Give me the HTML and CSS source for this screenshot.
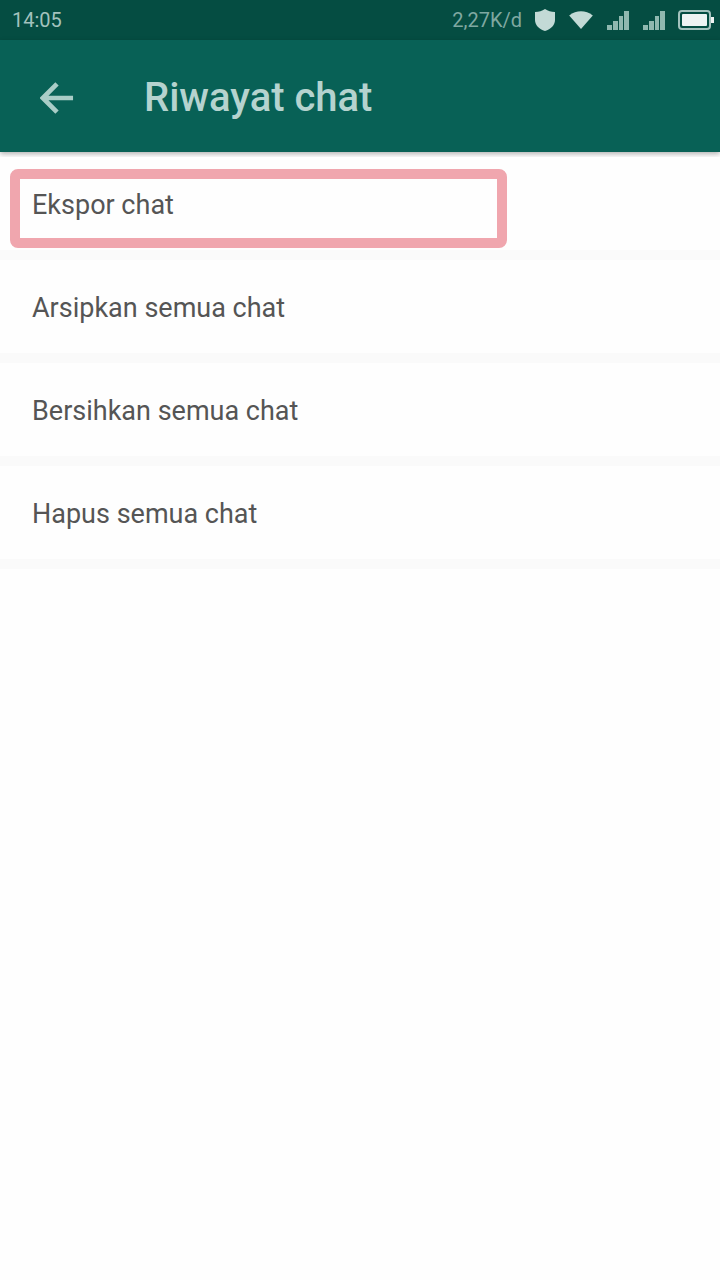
FILE: index.html
```html
<!DOCTYPE html>
<html lang="id">
<head>
<meta charset="utf-8">
<meta name="viewport" content="width=device-width, initial-scale=1">
<title>Riwayat chat</title>
<link rel="stylesheet" href="styles.css">
</head>
<body>
<div class="status-bar">
  <span class="clock">14:05</span>
  <div class="status-icons">
    <span class="speed">2,27K/d</span>
    <svg class="icon-shield" viewBox="0 0 22 24" aria-hidden="true"><path d="M11 1C8 3 5 4 1 4v8c0 5 4 9 10 11 6-2 10-6 10-11V4c-4 0-7-1-10-3z"/></svg>
    <svg class="icon-wifi" viewBox="0 0 28 22" aria-hidden="true"><path d="M1 6C9 0 19 0 27 6L14 21z"/></svg>
    <svg class="icon-signal" viewBox="0 0 24 22" aria-hidden="true"><path d="M1 21h5v-5H1zM7 21h5v-9H7zM13 21h4V7h-4zM18 21h5V2h-5z"/></svg>
    <svg class="icon-signal" viewBox="0 0 24 22" aria-hidden="true"><path d="M1 21h5v-5H1zM7 21h5v-9H7zM13 21h4V7h-4zM18 21h5V2h-5z"/></svg>
    <svg class="icon-battery" viewBox="0 0 36 20" aria-hidden="true"><rect class="battery-case" x="1" y="1" width="31" height="18" rx="3"/><rect x="4" y="4" width="25" height="12" rx="1"/><path d="M33 7h3v6h-3z"/></svg>
  </div>
</div>
<header class="app-bar">
  <button class="back" type="button" aria-label="Kembali">
    <svg class="icon-back" viewBox="0 0 36 36" aria-hidden="true"><path d="M35 18H4M18 3L3 18l15 15"/></svg>
  </button>
  <h1 class="title">Riwayat chat</h1>
</header>
<main class="menu">
  <button class="item item-marked" type="button">Ekspor chat</button>
  <button class="item" type="button">Arsipkan semua chat</button>
  <button class="item" type="button">Bersihkan semua chat</button>
  <button class="item" type="button">Hapus semua chat</button>
</main>
</body>
</html>
```
FILE: styles.css
```css
*,
*::after {
  box-sizing: border-box;
}

body {
  margin: 0;
  min-height: 100vh;
  background: #fefefe;
  color: #444;
  font-family: Roboto, "Noto Sans", sans-serif;
}

.status-bar {
  display: flex;
  align-items: center;
  justify-content: space-between;
  height: 40px;
  padding: 0 6px 0 12px;
  background: #054d42;
  color: #a3c2bd;
  font-size: 20px;
}

.status-icons {
  display: flex;
  align-items: center;
  gap: 12px;
}

.status-icons svg {
  fill: #c3dad6;
}

.speed {
  color: #7fa8a1;
}

.icon-shield {
  width: 22px;
  height: 24px;
}

.icon-wifi {
  width: 26px;
  height: 20px;
}

.status-icons .icon-signal {
  width: 24px;
  height: 22px;
  fill: #8fb8af;
}

.status-icons .icon-battery {
  width: 36px;
  height: 20px;
  fill: #eef4f3;
}

.icon-battery .battery-case {
  fill: none;
  stroke: #a3c2bd;
  stroke-width: 2;
}

.app-bar {
  display: flex;
  align-items: center;
  height: 112px;
  padding: 4px 40px 0;
  background: #086156;
  box-shadow: 0 2px 5px rgba(0, 0, 0, 0.3);
}

.back {
  display: flex;
  margin: 0 70px 0 0;
  padding: 0;
  border: 0;
  background: none;
}

.icon-back {
  width: 34px;
  height: 34px;
  fill: none;
  stroke: #a9cdc7;
  stroke-width: 5;
}

.title {
  margin: 0;
  color: #b5d3cf;
  font-size: 40px;
  font-weight: 500;
  line-height: 48px;
}

.menu {
  display: flex;
  flex-direction: column;
  padding-top: 5px;
}

.item {
  position: relative;
  min-height: 103px;
  padding: 30px 32px 27px;
  border: 0;
  border-bottom: 10px solid #fafafa;
  background: #fefefe;
  color: #555;
  font-family: inherit;
  font-size: 27px;
  line-height: 36px;
  text-align: left;
}

.item-marked::after {
  content: "";
  position: absolute;
  top: 12px;
  bottom: 2px;
  left: 10px;
  width: 69%;
  border: 10px solid #f0a6ae;
  border-radius: 8px;
}
```
